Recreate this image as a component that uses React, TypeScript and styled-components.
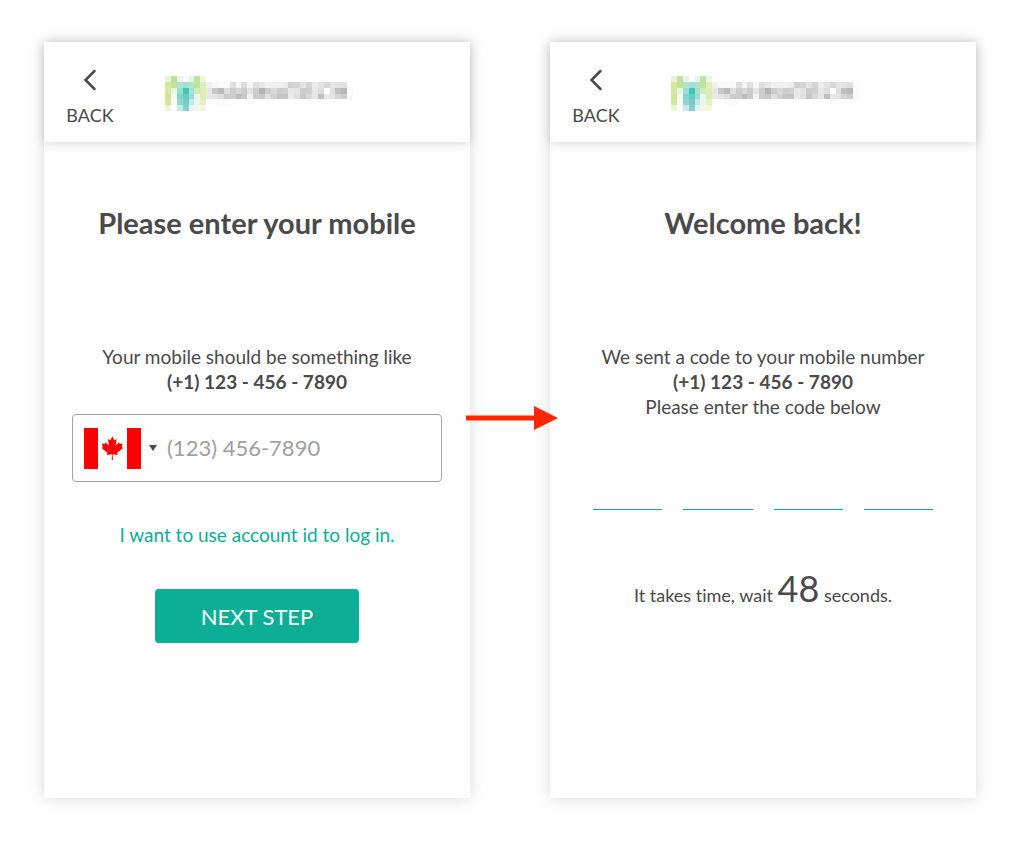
import React from 'react';
import styled, { createGlobalStyle } from 'styled-components';

const GlobalStyle = createGlobalStyle`
  *, *::before, *::after { box-sizing: border-box; }
  body {
    margin: 0;
    background: #fefefe;
    color: #4a4a4a;
    font-family: Lato, "Liberation Sans", sans-serif;
    font-variant-ligatures: none;
  }
  h1, p { margin: 0; }
  button, input, select { font: inherit; color: inherit; }
`;

const Flow = styled.main`
  display: grid;
  grid-template-columns: minmax(0, 1fr) 80px minmax(0, 1fr);
  min-height: 841px;
  padding: 42px 48px 43px 44px;
`;

const Screen = styled.section`
  background: #fefefe;
  box-shadow: 0 0 14px rgba(0, 0, 0, 0.14);
`;

const TopBar = styled.header`
  display: flex;
  align-items: center;
  gap: 51px;
  height: 100px;
  padding: 2px 22px 0;
  background: #fff;
  box-shadow: 0 1px 10px rgba(0, 0, 0, 0.16);
`;

const BackButton = styled.button`
  display: flex;
  flex-direction: column;
  align-items: center;
  gap: 12px;
  width: 48px;
  padding: 10px 0 0;
  border: 0;
  background: none;
  font-size: 18px;
  line-height: 24px;
  cursor: pointer;
`;

const Content = styled.div`
  display: flex;
  flex-direction: column;
  align-items: center;
  padding: 63px 28px 40px;
  text-align: center;
`;

const Title = styled.h1`
  margin-bottom: 103px;
  font-size: 29px;
  line-height: 36px;
  font-weight: 700;
`;

const Lead = styled.p`
  font-size: 19px;
  line-height: 25px;
`;

const PhoneBox = styled.div`
  display: flex;
  align-items: center;
  align-self: stretch;
  height: 68px;
  margin-top: 20px;
  padding: 0 11px;
  border: 1px solid #a3a3a3;
  border-radius: 4px;
`;

const CountryPicker = styled.label`
  position: relative;
  display: flex;
  align-items: center;
  gap: 8px;
`;

const CountrySelect = styled.select`
  position: absolute;
  inset: 0;
  width: 100%;
  opacity: 0;
  cursor: pointer;
`;

const PhoneInput = styled.input`
  flex: 1;
  min-width: 0;
  padding: 0 10px;
  border: 0;
  outline: 0;
  background: none;
  font-size: 22px;
  line-height: 32px;
  &::placeholder { color: #a0a0a0; opacity: 1; }
`;

const AccountLink = styled.a`
  margin: 40px 0 42px;
  color: #0cae96;
  font-size: 19px;
  line-height: 25px;
  text-decoration: none;
`;

const NextButton = styled.button`
  width: 204px;
  height: 54px;
  border: 0;
  border-radius: 4px;
  background: #0cae96;
  color: #fff;
  font-size: 22px;
  cursor: pointer;
`;

const CodeRow = styled.div`
  display: grid;
  grid-template-columns: repeat(4, minmax(0, 1fr));
  gap: 21px;
  align-self: stretch;
  margin: 51px 15px 0;
`;

const CodeDigit = styled.input`
  min-width: 0;
  height: 40px;
  padding: 0;
  border: 0;
  border-bottom: 1px solid #0cae96;
  outline: 0;
  background: none;
  font-size: 29px;
  text-align: center;
`;

const Countdown = styled.p`
  margin-top: 54px;
  font-size: 18px;
  line-height: 48px;
`;

const Seconds = styled.span`
  font-size: 36px;
`;

const Connector = styled.div`
  position: relative;
`;

const Arrow = styled.svg`
  position: absolute;
  top: 364px;
  left: -4px;
`;

/* Hex colours of the emblem, one string per mosaic row. */
const emblem = [
  'e6f2d4 bfe39c e8f6ec fafdfa e4f5e4 bfe39c f0f6dc',
  'd3e89c bfe39c b4e4cc a0dfd4 b0e4c8 bfe39c dfeebc',
  'd3e89c e4f5e0 9cdcd0 40c4c0 a8e0cc cfecc0 e0ecb8',
  'd0e594 f4faf0 84d4cc 64ccc8 9cdcd4 e8f6f0 e0ecb8',
  'd3e89c f8fcf4 90d4d0 78ccc8 c4e8e8 e8f6f0 e4f0c4',
  'eef6d8 ffffff c8eaec 84d0d0 e4f4f8 f2f8e4 f2f8e0',
].map((row) => row.split(' '));

/* Grey levels of the word beside it. */
const wordmark = [
  'f0 f8 fa f8 dd f4 dd f6 e0 e8 f0 f0 f0 ec d0 d4 e4 d4 ec e4 d8 e6 e4 e0 fa',
  'e6 c8 bb dd cc d8 cc e4 cc b4 cc d8 cc d0 e8 e4 cc d0 e8 dc ff e0 c0 b8 fa',
  'e8 e4 dd cc cc bb c8 f2 cc c8 e0 d0 c4 c4 ea e0 c8 d8 e6 c0 e8 e4 d4 cc fa',
  'fd fd fb fb fd fd fd fe fe fd fb fe fe fe fd fe fe fb fe fe fb fe fe fe fe',
].map((row) => row.split(' '));

function Logo() {
  return (
    <svg width="188" height="35" viewBox="0 0 32 6" preserveAspectRatio="none" shapeRendering="crispEdges" role="img" aria-label="Company logo">
      {emblem.map((row, y) =>
        row.map((c, x) => <rect key={`e${x}-${y}`} x={x} y={y} width="1" height="1" fill={`#${c}`} />)
      )}
      {wordmark.map((row, y) =>
        row.map((c, x) => <rect key={`w${x}-${y}`} x={x + 7} y={y + 1} width="1" height="1" fill={`#${c}${c}${c}`} />)
      )}
    </svg>
  );
}

function Header() {
  return (
    <TopBar>
      <BackButton type="button">
        <svg width="14" height="22" viewBox="0 0 14 22" fill="none" stroke="#4a4a4a" strokeWidth="2.5" strokeLinecap="round" aria-hidden="true">
          <path d="M11.500 2 2.500 11l9 9" />
        </svg>
        BACK
      </BackButton>
      <Logo />
    </TopBar>
  );
}

function Flag() {
  return (
    <svg width="57" height="41" viewBox="0 0 57 41" aria-hidden="true">
      <path fill="#fff" d="M0 0h57v41H0z" />
      <path fill="#f00" d="M0 0h14v41H0zM43 0h14v41H43z" />
      <path
        fill="#f00"
        d="M28.3 8.5l-2.1 3.8-2.3-1.2 1 6.3-3.4-3.2-.7 1.8-3-.5 1 3.6-1.3.9 5.9 4.8-.6 2.2 5.2-.8-.3 5.8h1.2l-.3-5.8 5.2.8-.6-2.2 5.9-4.8-1.3-.9 1-3.6-3 .5-.7-1.8-3.4 3.2 1-6.3-2.3 1.2z"
      />
    </svg>
  );
}

export default function App() {
  return (
    <>
      <GlobalStyle />
      <Flow>
        <Screen>
          <Header />
          <Content>
            <Title>Please enter your mobile</Title>
            <Lead>
              Your mobile should be something like
              <br />
              <b>(+1) 123 - 456 - 7890</b>
            </Lead>
            <PhoneBox>
              <CountryPicker>
                <Flag />
                <svg width="8" height="6" viewBox="0 0 8 6" aria-hidden="true">
                  <path fill="#4a4a4a" d="M0 0h8L4 6z" />
                </svg>
                <CountrySelect aria-label="Country" defaultValue="ca">
                  <option value="ca">Canada</option>
                </CountrySelect>
              </CountryPicker>
              <PhoneInput type="tel" aria-label="Mobile number" placeholder="(123) 456-7890" />
            </PhoneBox>
            <AccountLink href="#account">I want to use account id to log in.</AccountLink>
            <NextButton type="button">NEXT STEP</NextButton>
          </Content>
        </Screen>
        <Connector>
          <Arrow width="92" height="24" viewBox="0 0 92 24" aria-hidden="true">
            <path fill="#ff2600" d="M0 9.500h68V0l24 12-24 12v-9.500H0z" />
          </Arrow>
        </Connector>
        <Screen>
          <Header />
          <Content>
            <Title>Welcome back!</Title>
            <Lead>
              We sent a code to your mobile number
              <br />
              <b>(+1) 123 - 456 - 7890</b>
              <br />
              Please enter the code below
            </Lead>
            <CodeRow>
              {[1, 2, 3, 4].map((n) => (
                <CodeDigit key={n} inputMode="numeric" maxLength={1} aria-label={`Code digit ${n}`} />
              ))}
            </CodeRow>
            <Countdown>
              It takes time, wait <Seconds>48</Seconds> seconds.
            </Countdown>
          </Content>
        </Screen>
      </Flow>
    </>
  );
}
